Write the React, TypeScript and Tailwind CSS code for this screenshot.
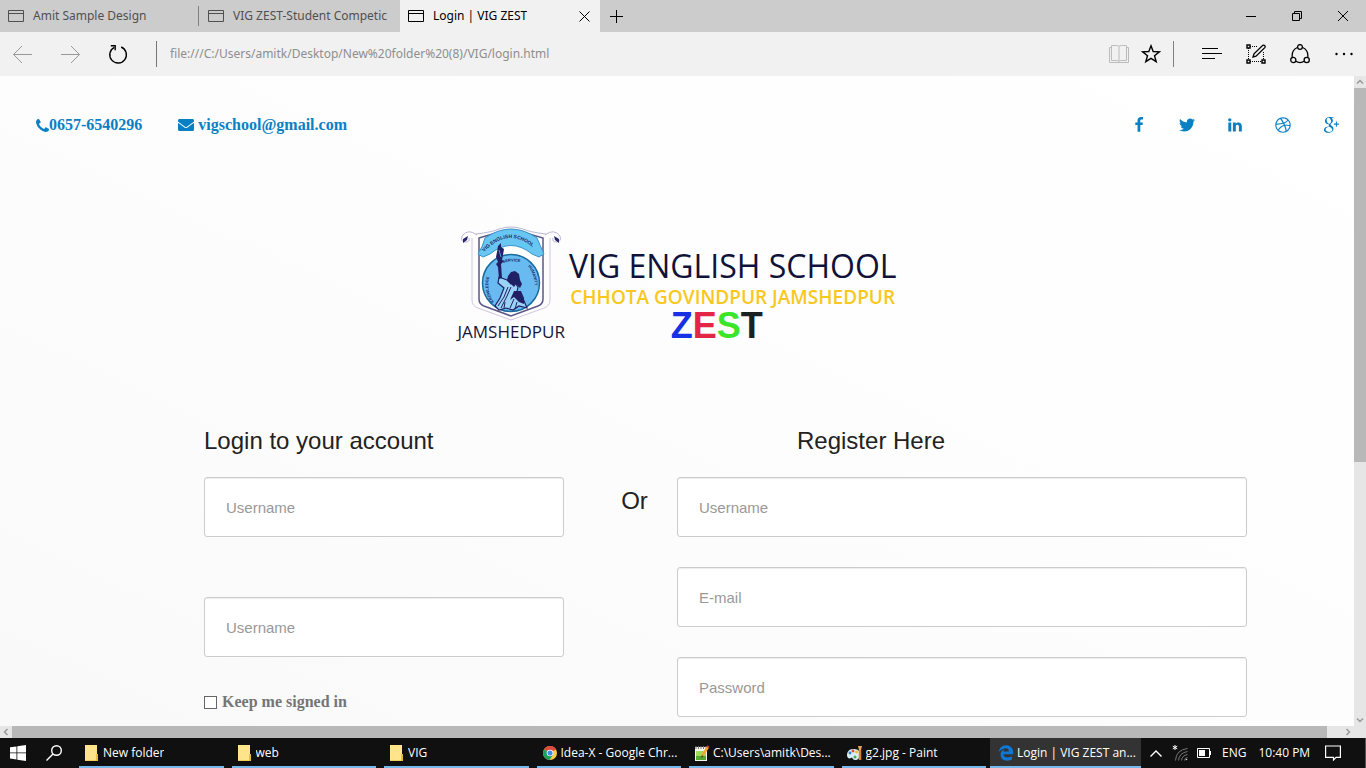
import React from "react";
import { FaEnvelope, FaTwitter, FaDribbble, FaEdgeLegacy } from "react-icons/fa";

const line = { fill: "none", stroke: "currentColor" } as const;

function WindowIcon() {
  return (
    <svg className="h-[14px] w-4 shrink-0" viewBox="0 0 16 14" {...line} aria-hidden="true">
      <path d="M.5 1.5h15v11H.5zM.5 4.5h15" />
    </svg>
  );
}

function PhoneIcon() {
  return (
    <svg className="size-[13px] shrink-0" viewBox="0 128 1408 1408" fill="currentColor" aria-hidden="true">
      <path d="M1408 1240q0 27-10 70.5t-21 68.5q-21 50-122 106-94 51-186 51-27 0-53-3.5t-57-12.5-47-14.5-55.5-20.5-49-18q-98-35-175-83-127-79-264-216t-216-264q-48-77-83-175-3-9-18-49t-20.5-55.5-14.5-47-12.5-57-3.5-53q0-92 51-186 56-101 106-122 25-11 68.5-21t70.5-10q14 0 21 3 18 6 53 76 11 19 30 54t35 63.5 31 53.5q3 4 17.5 25t21.5 35.5 7 28.5q0 20-28.5 50t-62 55-62 53-28.5 46q0 9 5 22.5t8.5 20.5 14 24 11.5 19q76 137 174 235t235 174q2 1 19 11.5t24 14 20.5 8.5 22.5 5q18 0 46-28.5t53-62 55-62 50-28.5q14 0 28.5 7t35.5 21.5 25 17.5q25 15 53.5 31t63.5 35 54 30q70 35 76 53 3 7 3 21z" />
    </svg>
  );
}

function FacebookIcon() {
  return (
    <svg className="size-4" viewBox="0 0 1792 1792" fill="currentColor" aria-hidden="true">
      <path d="M1343 12v264h-157q-86 0-116 36t-30 108v189h293l-39 296h-254v759h-306v-759h-255v-296h255v-218q0-186 104-288.5t277-102.5q147 0 228 12z" />
    </svg>
  );
}

function LinkedInIcon() {
  return (
    <svg className="size-4" viewBox="0 0 1792 1792" fill="currentColor" aria-hidden="true">
      <path d="M477 625v991h-330v-991h330zm21-306q1 73-50.5 122t-135.500 49h-2q-82 0-132-49t-50-122q0-74 51.500-122.500t134.500-48.500 133 48.500 51 122.500zm1166 729v568h-329v-530q0-105-40.500-164.500t-126.500-59.500q-63 0-105.500 34.500t-63.500 85.500q-11 30-11 81v553h-329q2-399 2-647t-1-296l-1-48h329v144h-2q20-32 41-56t56.500-52 87-43.500 114.500-15.500q171 0 275 113.500t104 332.500z" />
    </svg>
  );
}

function GooglePlusIcon() {
  return (
    <svg className="size-[17px]" viewBox="0 0 1792 1792" fill="currentColor" aria-hidden="true">
      <path d="M799 796q0 36 32 70.5t77.5 68 90.5 73.5 77 104 32 142q0 90-48 173-72 122-211 179.5t-298 57.5q-132 0-246.5-41.5t-171.5-137.5q-37-60-37-131 0-81 44.5-150t118.5-115q131-82 404-100-32-42-47.5-73.5t-15.5-73.5q0-36 21-85-46 4-68 4-148 0-249.5-96.5t-101.5-244.5q0-82 36-159t99-131q77-66 182.5-98t217.5-32h418l-138 88h-131q74 63 112 133t38 160q0 72-24.5 129.5t-59 93-69.5 65-59.5 61.5-24.5 66zm-146-96q38 0 78-16.5t66-43.5q53-57 53-159 0-58-17-125t-48.5-129.5-84.5-103.5-117-41q-42 0-82.5 19.5t-65.5 52.5q-47 59-47 160 0 46 10 97.5t31.5 103 52 92.5 75 67 96.5 26zm2 873q58 0 111.5-13t99-39 73-73 27.5-109q0-25-7-49t-14.5-42-27-41.5-29.5-35-38.5-34.5-36.5-29-41.5-30-36.5-26q-16-2-48-2-53 0-105 7t-107.5 25-97 46-68.5 74.5-27 105.5q0 70 35 123.5t91.5 83 119 44 127.5 14.5zm810-876h213v108h-213v219h-105v-219h-212v-108h212v-217h105v217z" />
    </svg>
  );
}

function Tab({ title, active = false, divided = false }: { title: string; active?: boolean; divided?: boolean }) {
  return (
    <div className={active ? "flex w-[200px] items-center bg-[#f1f1f1] pr-2 pl-2 text-black" : "flex w-[200px] items-center pl-2 text-[#505050]"}>
      <button type="button" role="tab" aria-selected={active} className="flex min-w-0 flex-1 items-center gap-[9px] overflow-hidden text-left text-[12px] leading-5 whitespace-nowrap">
        <WindowIcon />
        <span className="overflow-hidden">{title}</span>
      </button>
      {active ? (
        <button type="button" aria-label="Close tab" className="flex size-4 items-center justify-center">
          <svg className="size-[11px]" viewBox="0 0 11 11" {...line}>
            <path d="m.5.5 10 10m0-10-10 10" />
          </svg>
        </button>
      ) : (
        <span className={divided ? "mr-px ml-2 h-5 w-px bg-[#808080]" : "ml-1 w-px"} />
      )}
    </div>
  );
}

function BrowserChrome() {
  return (
    <header className="shrink-0 font-['Noto_Sans','Open_Sans',sans-serif]">
      <div className="flex h-8 bg-[#ccc]">
        <div role="tablist" className="flex">
          <Tab title="Amit Sample Design" divided />
          <Tab title="VIG ZEST-Student Competic" />
          <Tab title="Login | VIG ZEST" active />
        </div>
        <button type="button" aria-label="New tab" className="flex w-8 items-center justify-center">
          <svg className="size-[13px]" viewBox="0 0 13 13" {...line}>
            <path d="M6.5 0v13M0 6.5h13" />
          </svg>
        </button>
        <div className="ml-auto flex text-black">
          <button type="button" aria-label="Minimize" className="flex w-[46px] items-center justify-center">
            <svg className="size-[10px]" viewBox="0 0 10 10" {...line}><path d="M0 5.5h10" /></svg>
          </button>
          <button type="button" aria-label="Restore" className="flex w-[46px] items-center justify-center">
            <svg className="size-[10px]" viewBox="0 0 10 10" {...line}><path d="M.5 2.5h7v7h-7zM2.5 2.5v-2h7v7h-2" /></svg>
          </button>
          <button type="button" aria-label="Close" className="flex w-[46px] items-center justify-center">
            <svg className="size-[10px]" viewBox="0 0 10 10" {...line}><path d="m0 0 10 10M10 0 0 10" /></svg>
          </button>
        </div>
      </div>
      <div className="flex h-11 items-center bg-[#f1f1f1] pr-3 pl-3 text-black">
        <button type="button" aria-label="Back" className="mr-7 text-[#999]">
          <svg className="h-[18px] w-5" viewBox="0 0 20 18" {...line}><path d="M20 9.500H1.500M10 1 1.500 9.500l8.500 8.500" /></svg>
        </button>
        <button type="button" aria-label="Forward" className="mr-7 text-[#999]">
          <svg className="h-[18px] w-5" viewBox="0 0 20 18" {...line}><path d="M1 9.500h18.500M11 1l8.500 8.500L11 18" /></svg>
        </button>
        <button type="button" aria-label="Refresh">
          <svg className="size-5" viewBox="0 0 20 20" {...line} strokeWidth="1.400">
            <path d="M13.200 3A8.300 8.300 0 1 1 6.300 3.300" />
            <path d="M2.800 1.700h4.400v4.500" />
          </svg>
        </button>
        <span className="mr-[13px] ml-7 h-[26px] w-px bg-[#777]" />
        <input type="text" aria-label="Address" readOnly value="file:///C:/Users/amitk/Desktop/New%20folder%20(8)/VIG/login.html" className="min-w-0 flex-1 bg-transparent text-[12px] leading-5 text-[#8e8e8e] outline-none" />
        <button type="button" aria-label="Reading view" className="mr-3 text-[#bbb]">
          <svg className="h-5 w-5" viewBox="0 0 20 20" {...line}>
            <path d="M10 2.500v14.500M2.500 1.500h5q2 0 2.500 1 .5-1 2.500-1h5v15h-5q-2 0-2.500 1-.5-1-2.500-1h-5zM2.500 3.500h-2v15h19v-15h-2" />
          </svg>
        </button>
        <button type="button" aria-label="Add to favorites">
          <svg className="size-5" viewBox="0 0 20 20" {...line} strokeWidth="1.400">
            <path d="m10 1.800 2.200 5.700 6.200.3-4.900 3.900 1.700 6L10 14.300l-5.200 3.400 1.700-6L1.600 7.800l6.200-.3z" />
          </svg>
        </button>
        <span className="mr-7 ml-3 h-[26px] w-px bg-[#808080]" />
        <button type="button" aria-label="Hub" className="mr-6">
          <svg className="h-3 w-5" viewBox="0 0 20 12" {...line}><path d="M0 .500h16M0 5.500h20M0 10.500h13" /></svg>
        </button>
        <button type="button" aria-label="Make a web note" className="mr-6">
          <svg className="size-5" viewBox="0 0 20 20" {...line}>
            <path d="M4 2.500h8M4 17.500h12M2.500 4v12M17.500 8v8" strokeDasharray="1 1" />
            <path d="M1 1h3v3H1zM1 16h3v3H1zM16 16h3v3h-3z" strokeWidth="1.400" />
            <path d="m7 13 1-3.200 8.800-8.500q1.200-.5 2 .3.700.9 0 2L10 12.200z" strokeWidth="1.300" />
          </svg>
        </button>
        <button type="button" aria-label="Share" className="mr-6">
          <svg className="size-5" viewBox="0 0 20 20" {...line} strokeWidth="1.300">
            <path d="M7.300 3.500Q1.500 6 2.200 13.200M12.700 3.500Q18.500 6 17.800 13.200M5.700 17.300q4.300 2.500 8.600 0" />
            <circle cx="10" cy="3" r="2.400" /><circle cx="3.300" cy="16" r="2.600" /><circle cx="16.700" cy="16" r="2.600" />
          </svg>
        </button>
        <button type="button" aria-label="More actions">
          <svg className="h-1 w-5" viewBox="0 0 20 4" fill="currentColor"><circle cx="2.500" cy="2" r="1.200" /><circle cx="10" cy="2" r="1.200" /><circle cx="17.500" cy="2" r="1.200" /></svg>
        </button>
      </div>
    </header>
  );
}

function Crest() {
  return (
    <svg className="h-[96px] w-[104px]" viewBox="0 0 104 96" fill="none" aria-label="VIG English School crest" role="img">
      <path d="M18 9Q9 2 3 10q-2 6 4 6 4 0 3-4M86 9q9-7 15 1 2 6-4 6-4 0-3-4M17 8Q34 6 40 3q12-4 24 0 6 3 23 5" stroke="#aaa5c8" strokeWidth=".8" />
      <path d="m4 13 5-3-1 4-4 3zM100 13l-5-3 1 4 4 3z" fill="#29256b" />
      <path d="M13 12v62q0 6 6 8l33 12 33-12q6-2 6-8V12" stroke="#c5b8d4" strokeWidth=".8" />
      <path d="M20 12l24-7q8-2 16 0l24 7V73q0 5-5 7L52 90 25 80q-5-2-5-7z" stroke="#5c5688" strokeWidth="1.500" fill="#fff" />
      <circle cx="52" cy="57" r="28.500" fill="#69baf0" stroke="#176b9e" strokeWidth="1.500" />
      <path d="M26 12Q52-6 78 12q3 7 7 16l-5 3-7-3Q52 11 31 28l-7 3-5-3q5-8 7-16z" fill="#68c6f2" stroke="#3a94c9" />
      <path id="crest-name" d="M25 26Q52-3 81 28" />
      <path id="crest-left" d="M35 76Q23 58 36 39" />
      <path id="crest-top" d="M44 37q9-3 22 0" />
      <path id="crest-right" d="M69 40q13 17 1 40" />
      <g fill="#1d2769" fontFamily="Liberation Sans, sans-serif" fontWeight="700">
        <text fontSize="5"><textPath href="#crest-name">VIG ENGLISH SCHOOL</textPath></text>
        <text fontSize="4"><textPath href="#crest-left">KNOWLEDGE</textPath></text>
        <text fontSize="4"><textPath href="#crest-top">SERVICE</textPath></text>
        <text fontSize="4"><textPath href="#crest-right">HUMANITY</textPath></text>
      </g>
      <path d="M40 51 48 54 52 58 55 56 59 61 58 66 63 70 68 82 60 80 54 84 47 82 40 84 36 80 41 72 45 62 39 57z" fill="#9bd3f7" stroke="#202064" strokeWidth="1.200" />
      <g fill="#202064">
        <path d="m39 20 3-3 0 4 3 2-1 6-1 5 2 1-3 3 1 14-3 1-1-12-2-3 2-2-2-5 1-5z" />
        <path d="m49 50 3-4 4-1 4 3 1 6 2 4-2 4-4-4-2 3-4-4-3-3z" />
        <path d="m55 65 7 0 3 7 0 6-5-2-5-5-4 3z" />
      </g>
      <path d="m52 61-4 9-6 12M49 61l-4 10-6 9M55 73l-4 9M58 76l-2 7M46 76l-1 6" stroke="#202064" strokeWidth="1" />
      <path d="m40 24 2 7" stroke="#69baf0" strokeWidth=".8" />
    </svg>
  );
}

function Logo() {
  return (
    <div className="flex justify-center gap-1 font-['Open_Sans',sans-serif] whitespace-nowrap">
      <div className="flex flex-col items-center">
        <Crest />
        <span className="text-[17px] leading-5 text-[#15153a]">JAMSHEDPUR</span>
      </div>
      <div className="flex flex-col items-center pt-5">
        <h1 className="text-[32px] leading-10 text-[#11123a]">VIG ENGLISH SCHOOL</h1>
        <p className="text-[19px] leading-[22px] font-semibold text-[#f8c820]">CHHOTA GOVINDPUR JAMSHEDPUR</p>
        <p className="mr-8 font-['Liberation_Sans',sans-serif] text-[36px] leading-9 font-bold">
          <span className="text-[#1732e5]">Z</span>
          <span className="text-[#e32643]">E</span>
          <span className="text-[#3be52a]">S</span>
          <span className="text-[#1b2022]">T</span>
        </p>
      </div>
    </div>
  );
}

function Field({ id, label, type = "text" }: { id: string; label: string; type?: string }) {
  return (
    <input id={id} aria-label={label} type={type} placeholder={label} className="block h-[60px] w-full rounded-[3px] border border-[#ccc] bg-white px-[21px] text-[15px] text-[#555] shadow-[inset_0_1px_1px_rgba(0,0,0,0.075)] outline-none placeholder:text-[#999]" />
  );
}

function LoginPage() {
  return (
    <main className="min-w-0 flex-1 overflow-hidden bg-linear-to-tr from-[#f9f9f9] via-[#fdfdfd] to-white font-['Liberation_Sans',sans-serif]">
      <div className="flex items-center justify-between pt-[37px] pr-[14px] pl-9 text-[#0a80c4]">
        <div className="flex gap-9 font-['Liberation_Serif',serif] text-[16px] leading-6 font-bold">
          <a href="tel:06576540296" className="flex items-center"><PhoneIcon />0657-6540296</a>
          <a href="mailto:vigschool@gmail.com" className="flex items-center gap-1"><FaEnvelope className="size-4" />vigschool@gmail.com</a>
        </div>
        <nav aria-label="Social links" className="flex items-center gap-8 text-[16px]">
          <a href="#facebook" aria-label="Facebook"><FacebookIcon /></a>
          <a href="#twitter" aria-label="Twitter"><FaTwitter /></a>
          <a href="#linkedin" aria-label="LinkedIn"><LinkedInIcon /></a>
          <a href="#dribbble" aria-label="Dribbble"><FaDribbble /></a>
          <a href="#google-plus" aria-label="Google Plus"><GooglePlusIcon /></a>
        </nav>
      </div>
      <div className="pt-[89px]"><Logo /></div>
      <div className="grid grid-cols-[360fr_113fr_570fr] pt-[81px] pr-[107px] pl-[204px] text-[#222]">
        <form>
          <h2 className="mb-5 text-[24px] leading-8">Login to your account</h2>
          <div className="flex flex-col gap-[60px]">
            <Field id="login-name" label="Username" />
            <Field id="login-pass" label="Username" />
          </div>
          <label className="mt-[33px] flex items-center gap-[5px] font-['Liberation_Serif',serif] text-[16px] leading-6 font-bold text-[#757575]">
            <input type="checkbox" className="size-[13px] appearance-none border border-[#666] bg-white checked:bg-[#0a80c4]" />
            Keep me signed in
          </label>
        </form>
        <h2 className="pt-[60px] pl-7 text-center text-[24px] leading-8">Or</h2>
        <form>
          <h2 className="mb-5 pl-[120px] text-[24px] leading-8">Register Here</h2>
          <div className="flex flex-col gap-[30px]">
            <Field id="reg-name" label="Username" />
            <Field id="reg-mail" label="E-mail" type="email" />
            <Field id="reg-pass" label="Password" type="password" />
          </div>
        </form>
      </div>
    </main>
  );
}

function ScrollButton({ label, path }: { label: string; path: string }) {
  return (
    <button type="button" aria-label={label} className="flex size-3 shrink-0 items-center justify-center text-[#999]">
      <svg className="size-2" viewBox="0 0 8 8" {...line} strokeWidth="1.500"><path d={path} /></svg>
    </button>
  );
}

function FolderIcon() {
  return (
    <svg className="h-4 w-[14px]" viewBox="0 0 14 16" aria-hidden="true">
      <path d="M0 0h12v10h1v6H0z" fill="#ffe48c" /><path d="M11 9h2v7h-2z" fill="#e9bd3c" /><path d="M0 15h11v1H0z" fill="#f2ce5c" />
    </svg>
  );
}

function ChromeIcon() {
  return (
    <svg className="size-[14px]" viewBox="0 0 16 16" aria-hidden="true">
      <circle cx="8" cy="8" r="8" fill="#ffcd41" />
      <path d="M8 8 1.100 4A8 8 0 0 1 14.900 4z" fill="#dd4b3e" /><path d="M8 4h6.900A8 8 0 0 0 8 0z" fill="#dd4b3e" />
      <path d="M1.100 4A8 8 0 0 0 7.500 16l4-6L8 8z" fill="#1ba05e" />
      <circle cx="8" cy="8" r="3.800" fill="#fff" /><circle cx="8" cy="8" r="2.900" fill="#4a86e8" />
    </svg>
  );
}

function NotepadIcon() {
  return (
    <svg className="size-4" viewBox="0 0 16 16" aria-hidden="true">
      <path d="M1 2h12v14H1z" fill="#f5f5f0" /><path d="M2 6h10v9H2z" fill="#9edb58" /><path d="M2 11h10v4H2z" fill="#55a92d" />
      <path d="M2 1v3M4.500 1v3M7 1v3M9.500 1v3M12 1v3" stroke="#777" />
      <path d="m14 2-6 9" stroke="#f4a62a" strokeWidth="2.500" /><path d="m14.500 1-1 1.500" stroke="#c83a30" strokeWidth="2.500" /><path d="m8 10-1 3 2.500-1.500z" fill="#443" />
    </svg>
  );
}

function PaintIcon() {
  return (
    <svg className="size-4" viewBox="0 0 16 16" aria-hidden="true">
      <path d="M6 4C2 4 0 7 0 10c0 3 2 4 4 3s1 2 4 2 5-2 5-6-3-5-7-5z" fill="#d7edf7" />
      <circle cx="3" cy="8" r="1.400" fill="#3478c8" /><circle cx="6" cy="6" r="1.400" fill="#dc4a35" /><circle cx="9.500" cy="7" r="1.400" fill="#efbd28" /><circle cx="8" cy="12" r="1.500" fill="#48aa48" />
      <path d="M13 5v10" stroke="#d88327" strokeWidth="2.500" /><path d="M11 1h4l-1 4h-2z" fill="#e7a55b" />
    </svg>
  );
}

const tasks = [
  { title: "New folder", icon: <FolderIcon /> },
  { title: "web", icon: <FolderIcon /> },
  { title: "VIG", icon: <FolderIcon /> },
  { title: "Idea-X - Google Chr...", icon: <ChromeIcon /> },
  { title: "C:\\Users\\amitk\\Des...", icon: <NotepadIcon /> },
  { title: "g2.jpg - Paint", icon: <PaintIcon /> },
];

function Taskbar() {
  return (
    <footer className="flex h-[30px] shrink-0 bg-[#101010] text-[12px] leading-4 text-white">
      <div className="flex w-[79px] shrink-0 items-center gap-5 pl-[10px]">
        <button type="button" aria-label="Start">
          <svg className="block size-4" viewBox="0 0 16 16" fill="currentColor"><path d="m0 2.300 6.500-.9v6.100H0zM7.300 1.300 16 0v7.500H7.300zM0 8.300h6.500v6.200L0 13.600zM7.300 8.300H16V16l-8.700-1.300z" /></svg>
        </button>
        <button type="button" aria-label="Search">
          <svg className="block size-4" viewBox="0 0 16 16" {...line} strokeWidth="1.400"><circle cx="10.500" cy="5.500" r="4.800" /><path d="M7 9 .5 15.500" /></svg>
        </button>
      </div>
      <div className="flex min-w-0 flex-1 gap-2">
        {tasks.map((task) => (
          <button key={task.title} type="button" className="flex min-w-0 flex-1 items-center gap-[3px] border-b-2 border-[#76b9ed] pt-px pl-[5px] whitespace-nowrap">
            <span className="flex w-4 shrink-0 justify-center">{task.icon}</span>
            <span className="overflow-hidden">{task.title}</span>
          </button>
        ))}
      </div>
      <button type="button" className="ml-1 flex w-[151px] shrink-0 items-center gap-[3px] border-b-2 border-[#76b9ed] bg-[#333] pt-px pl-2 whitespace-nowrap">
        <FaEdgeLegacy className="size-4 shrink-0 text-[#0f78d4]" />
        <span>Login | VIG ZEST an...</span>
      </button>
      <div className="flex w-[225px] shrink-0 items-center pl-[9px] whitespace-nowrap">
        <button type="button" aria-label="Show hidden icons" className="mr-[10px]">
          <svg className="block h-[7px] w-3" viewBox="0 0 12 7" {...line} strokeWidth="1.400"><path d="m.5 6.500 5.500-5.500 5.500 5.500" /></svg>
        </button>
        <button type="button" aria-label="Network" className="mr-[9px]">
          <svg className="block size-4" viewBox="0 0 16 16" {...line}>
            <path d="M3 0v5M.8 1.200l4.400 2.600M5.200 1.200.8 3.800" />
            <g stroke="#777"><path d="M3.500 15.500Q4 5 15.500 3.500M6.500 15.500Q7 8 15.500 6.500M9.500 15.500q.5-5 6-6M12.500 15.500q.2-2.500 3-3" /></g>
            <circle cx="14.500" cy="14.500" r=".8" fill="#ccc" stroke="none" />
          </svg>
        </button>
        <button type="button" aria-label="Battery" className="mr-[10px]">
          <svg className="block h-[10px] w-[15px]" viewBox="0 0 15 10" {...line}><path d="M.5.5h12v9H.5zM13.500 3v4" /><path d="M2 2h6v6H2z" fill="currentColor" stroke="none" /></svg>
        </button>
        <span className="mr-3">ENG</span>
        <time>10:40 PM</time>
        <button type="button" aria-label="Notifications" className="mr-6 ml-auto">
          <svg className="block size-4" viewBox="0 0 16 16" {...line} strokeWidth="1.200"><path d="M.6 1h14.800v11.400h-4.400L8.500 15v-2.600H.6z" /></svg>
        </button>
        <span className="h-full w-px bg-[#555]" />
      </div>
    </footer>
  );
}

export default function App() {
  return (
    <div className="flex h-screen flex-col overflow-hidden bg-[#f1f1f1] font-['Open_Sans','Noto_Sans',sans-serif]">
      <BrowserChrome />
      <div className="flex min-h-0 flex-1">
        <LoginPage />
        <div className="flex w-3 shrink-0 flex-col bg-[#e6e6e6]">
          <ScrollButton label="Scroll up" path="m1 5.500 3-3 3 3" />
          <div className="min-h-0 flex-[374] bg-[#b8b8b8]" />
          <div className="min-h-0 flex-[252]" />
          <ScrollButton label="Scroll down" path="m1 2.500 3 3 3-3" />
        </div>
      </div>
      <div className="flex h-3 shrink-0 bg-[#e6e6e6]">
        <ScrollButton label="Scroll left" path="m5.500 1-3 3 3 3" />
        <div className="flex-1 bg-[#b8b8b8]" />
        <div className="flex w-[39px] justify-end pr-3">
          <ScrollButton label="Scroll right" path="m2.500 1 3 3-3 3" />
        </div>
      </div>
      <Taskbar />
    </div>
  );
}
